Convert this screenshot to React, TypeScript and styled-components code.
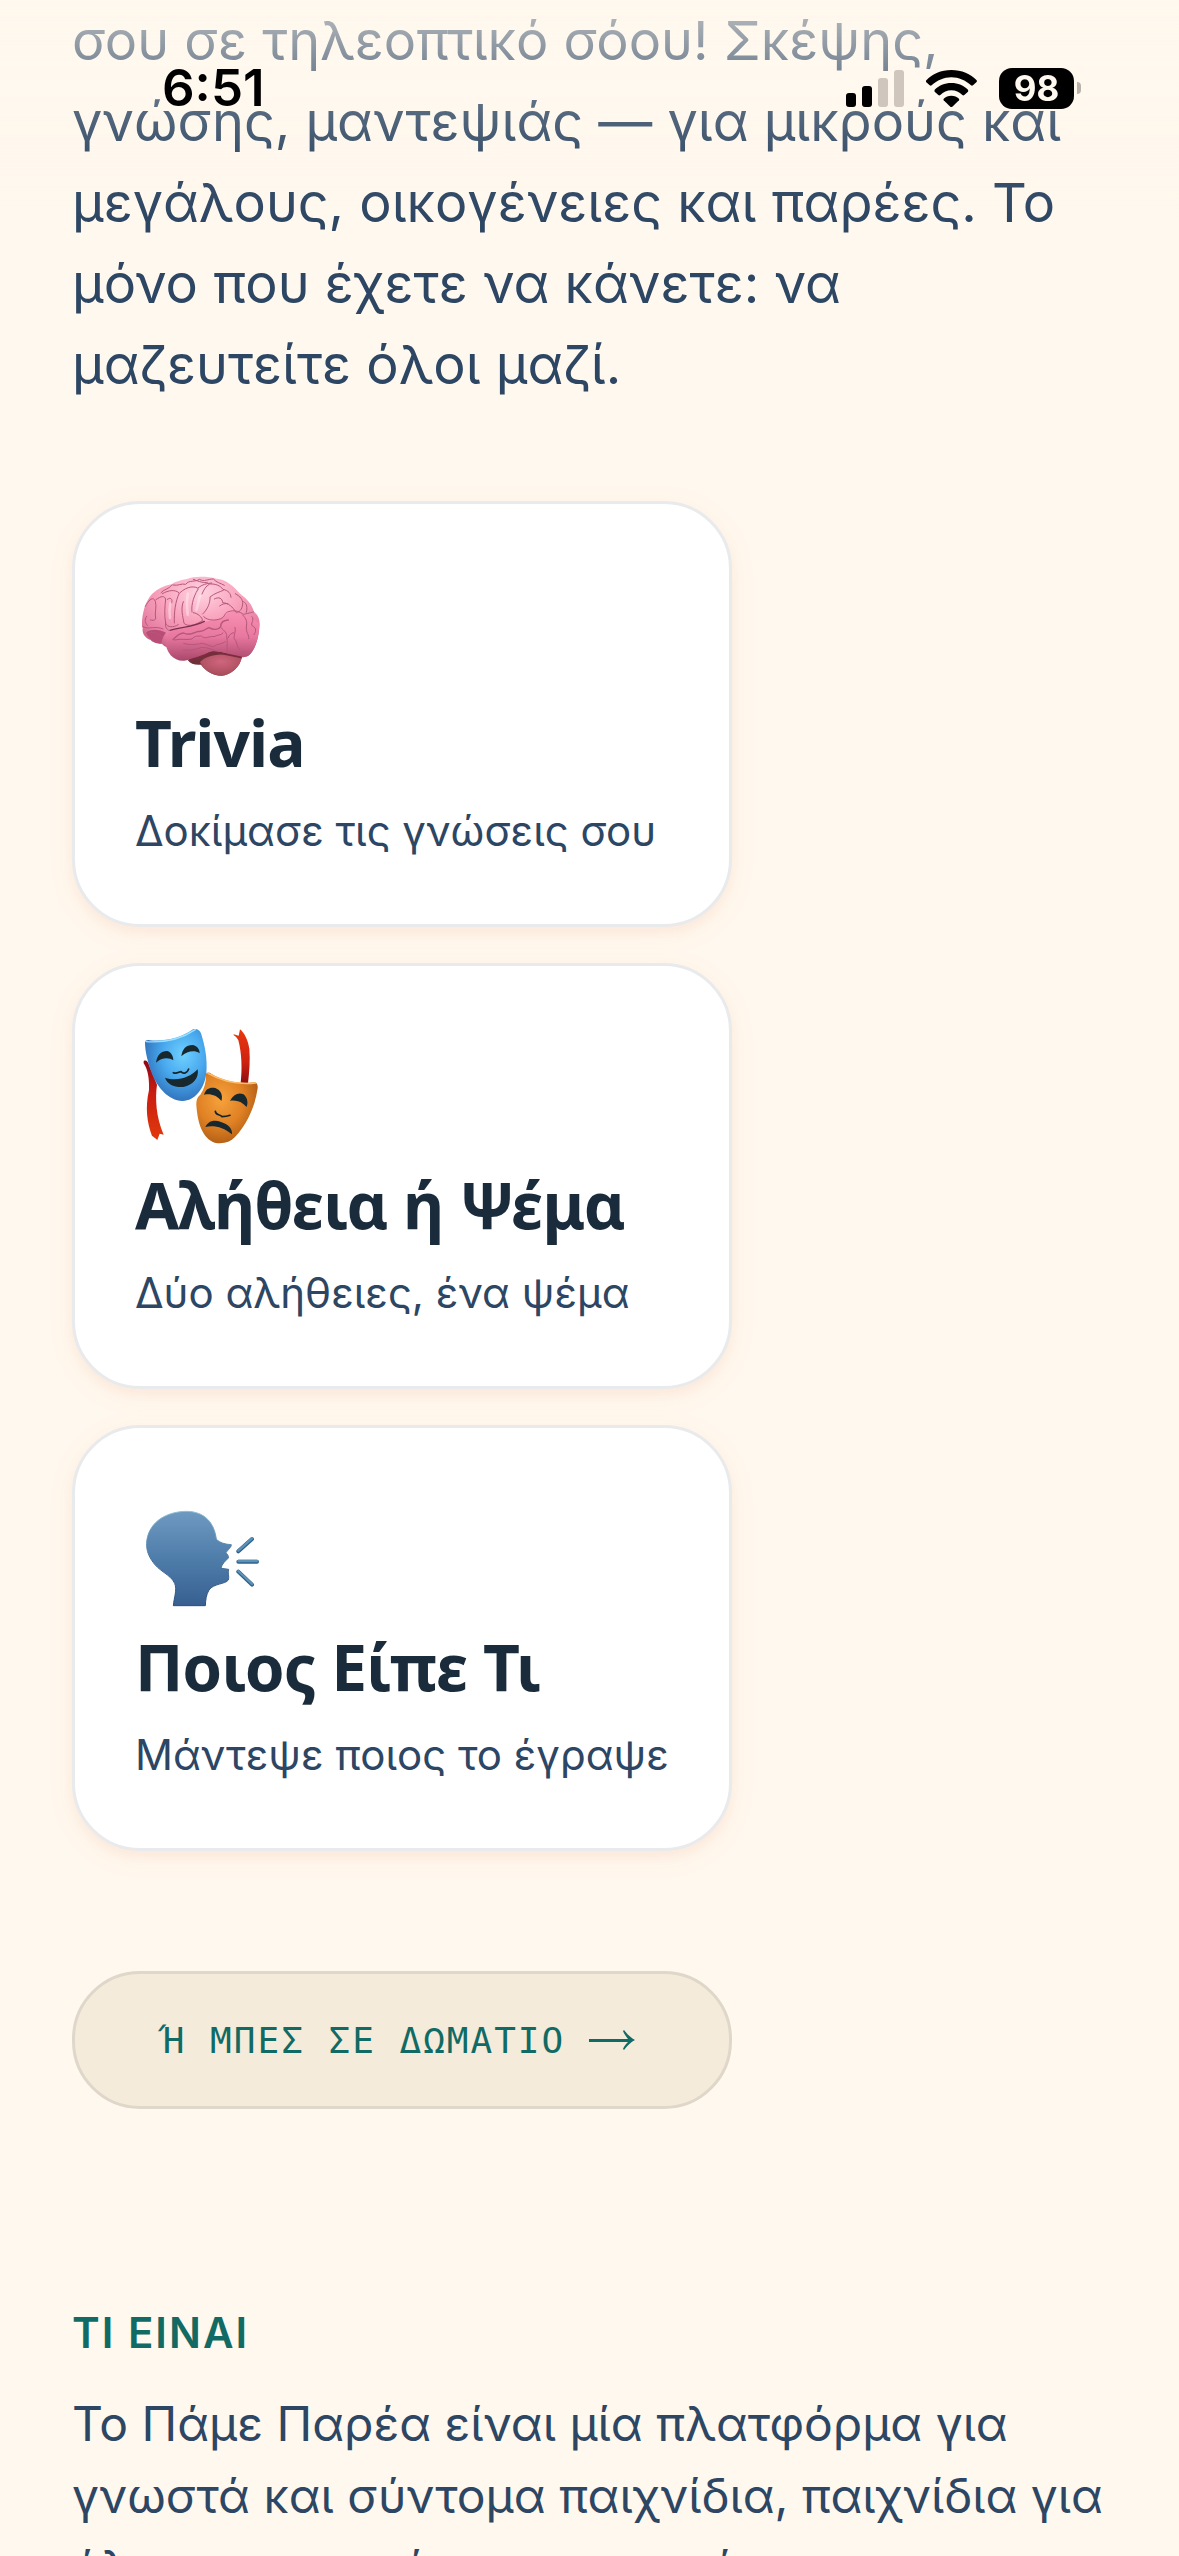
import React from 'react'
import styled, { createGlobalStyle } from 'styled-components'

type GameIcon = "brain" | "masks" | "speaking";

interface Game {
    id: string;
    icon: GameIcon;
    title: string;
    subtitle: string;
}

const GAMES: Game[] = [
    { id: "trivia", icon: "brain", title: "Trivia", subtitle: "Δοκίμασε τις γνώσεις σου" },
    { id: "truth", icon: "masks", title: "Αλήθεια ή Ψέμα", subtitle: "Δύο αλήθειες, ένα ψέμα" },
    { id: "who", icon: "speaking", title: "Ποιος Είπε Τι", subtitle: "Μάντεψε ποιος το έγραψε" },
]

const BrainIcon: React.FC = () => (
    <EmojiSvg viewBox="45 12 378 360" aria-hidden="true">
        <defs>
            <radialGradient id="brainFill" cx="0.5" cy="0.2" r="0.75">
                <stop offset="0" stopColor="#ffd3e0" />
                <stop offset="0.45" stopColor="#f9a3bd" />
                <stop offset="0.8" stopColor="#e77fa3" />
                <stop offset="1" stopColor="#c25a80" />
            </radialGradient>
            <linearGradient id="lobeFill" x1="0" y1="0" x2="0" y2="1">
                <stop offset="0" stopColor="#f88fb2" />
                <stop offset="0.5" stopColor="#e8789f" />
                <stop offset="1" stopColor="#a9476a" />
            </linearGradient>
            <radialGradient id="stemFill" cx="0.5" cy="0.35" r="0.7">
                <stop offset="0" stopColor="#d0657f" />
                <stop offset="1" stopColor="#a34a55" />
            </radialGradient>
        </defs>
        <path d="M203 300C212 312 226 316 243 314C258 334 280 347 304 347C332 345 360 322 366 290L290 262Z" fill="#70303a" />
        <path d="M240 306C252 332 279 347 304 347C332 345 360 322 366 290C340 278 262 278 240 306Z" fill="url(#stemFill)" />
        <path d="M66 196C65 172 72 128 96 102C114 86 134 77 154 73C167 64 185 60 201 57C222 48 262 49 290 56C318 58 340 78 360 101C384 118 396 135 402 155C416 166 421 180 418 205C415 242 402 276 384 288C374 293 362 292 352 288C320 281 295 270 270 275L150 262C136 262 130 256 126 251C112 251 98 248 92 240C74 234 66 220 68 205Z" fill="url(#brainFill)" />
        <path d="M136 239C138 222 158 206 192 205C214 200 230 192 262 184C290 180 309 178 323 160C346 148 384 164 418 190C416 242 402 276 384 288C374 293 362 292 352 288C320 281 295 270 270 275C248 288 220 297 193 302C164 305 136 280 136 239Z" fill="url(#lobeFill)" />
        <path d="M78 218C91 206 118 207 138 218C128 229 124 247 125 251C108 251 94 246 78 218Z" fill="#b94d75" />
        <g fill="none" stroke="#b5587a" strokeWidth="3" strokeLinecap="round" strokeLinejoin="round">
            <path d="M76 139C92 110 102 113 106 124C111 140 103 156 107 177C104 181 97 182 91 180" />
            <path d="M108 119C125 107 132 107 137 117C135 137 132 164 137 190C141 202 160 204 175 194" />
            <path d="M127 101C146 90 165 88 178 99C166 124 162 157 163 189" />
            <path d="M142 118C151 111 159 116 155 129" />
            <path d="M180 98C202 77 226 78 235 86C216 116 214 143 216 156" />
            <path d="M190 125C181 146 189 171 192 190C204 202 228 195 248 181C246 172 234 160 220 158" />
            <path d="M235 83C247 74 258 70 275 69" />
            <path d="M246 102C252 88 257 79 269 72C287 71 301 77 309 88C326 92 332 100 333 112" />
            <path d="M248 162C264 147 271 127 270 111C285 99 299 96 310 91" />
            <path d="M283 117C297 109 307 115 308 128C325 129 339 141 347 156" />
            <path d="M299 138C307 131 315 130 324 131" />
            <path d="M251 170C264 184 289 181 302 176C316 170 313 160 323 156C345 147 361 157 371 163C389 159 398 156 401 156" />
            <path d="M346 101C361 110 369 118 368 132C366 151 358 155 350 158" />
            <path d="M371 125C382 132 382 143 379 157" />
            <path d="M368 165C379 176 382 184 379 201C378 220 388 223 386 236" />
            <path d="M396 170C405 179 390 191 397 198C411 204 408 216 402 224" />
            <path d="M68 200C86 210 106 196 129 207" />
            <path d="M80 169C71 180 77 192 83 197" />
            <path d="M83 219C99 214 112 220 125 230" />
            <path d="M137 188C134 202 141 208 146 211" />
            <path d="M159 239C170 227 179 219 191 219C207 228 220 219 234 214C250 217 257 206 267 203C281 211 296 210 302 200C302 188 310 181 325 180" strokeWidth="4" />
            <path d="M163 240C184 235 200 241 216 237C224 226 235 229 244 228C256 240 267 227 282 230C294 223 303 227 309 219" />
            <path d="M191 250C208 256 229 254 245 250C259 251 268 259 281 260C292 250 303 255 316 245" />
            <path d="M190 270C208 274 230 267 246 262C262 262 273 268 286 272" />
            <path d="M302 202C315 215 321 218 320 231C324 245 319 260 322 273" />
            <path d="M345 202C349 213 342 221 342 235C352 243 349 260 359 270" />
            <path d="M324 234C328 224 333 220 341 218" />
            <path d="M360 281C364 276 371 274 378 276" />
            <path d="M158 75C175 79 184 69 197 73C207 59 226 67 238 58C253 66 264 57 280 57C290 68 301 69 313 76" />
            <path d="M220 58C240 66 251 69 262 67" />
            <path d="M123 98C130 88 146 88 155 76" />
        </g>
        <path d="M150 211C188 200 220 201 253 184" fill="none" stroke="#7d2f50" strokeWidth="4" strokeLinecap="round" />
        <path d="M209 300C229 296 259 284 278 277C310 279 332 287 363 292" fill="none" stroke="#7d2c3f" strokeWidth="5" strokeLinecap="round" />
        <g fill="none" stroke="#fff0f5" strokeOpacity="0.45" strokeWidth="8" strokeLinecap="round">
            <path d="M204 101C198 120 201 142 203 164" />
            <path d="M240 108C234 128 233 140 229 150" />
            <path d="M151 129C148 144 148 161 150 174" />
        </g>
    </EmojiSvg>
)

const MasksIcon: React.FC = () => (
    <EmojiSvg viewBox="45 48 378 360" aria-hidden="true">
        <defs>
            <radialGradient id="blueMask" cx="0.62" cy="0.36" r="0.75">
                <stop offset="0" stopColor="#6fd0ff" />
                <stop offset="0.45" stopColor="#49a9ee" />
                <stop offset="1" stopColor="#2862ad" />
            </radialGradient>
            <radialGradient id="orangeMask" cx="0.4" cy="0.38" r="0.75">
                <stop offset="0" stopColor="#f7a23c" />
                <stop offset="0.5" stopColor="#df8124" />
                <stop offset="1" stopColor="#a1500f" />
            </radialGradient>
            <linearGradient id="ribbonFill" x1="0" y1="0" x2="0" y2="1">
                <stop offset="0" stopColor="#8f0718" />
                <stop offset="0.4" stopColor="#c81d10" />
                <stop offset="1" stopColor="#e23a0c" />
            </linearGradient>
            <linearGradient id="ribbonBack" x1="0" y1="0" x2="0" y2="1">
                <stop offset="0" stopColor="#e8380f" />
                <stop offset="0.6" stopColor="#cf220f" />
                <stop offset="1" stopColor="#8f0c12" />
            </linearGradient>
        </defs>
        <path d="M71 153C78 149 84 154 87 165L111 224C105 264 108 321 131 374L119 371L112 390C104 384 100 380 96 378C81 337 75 294 87 240C88 208 84 178 71 160Z" fill="url(#ribbonFill)" />
        <path d="M341 73L356 77L360 58C374 69 384 91 388 116C391 150 388 184 384 220L362 218C367 177 365 128 355 91C351 83 346 79 341 76Z" fill="url(#ribbonBack)" />
        <path d="M75 97C76 91 82 89 90 91C139 94 181 84 219 58C230 54 239 60 243 70C254 105 263 145 259 190C254 236 224 273 188 273C143 271 112 230 96 191C84 160 75 125 75 97Z" fill="url(#blueMask)" />
        <path d="M78 95C130 99 181 89 226 59" fill="none" stroke="#9be0ff" strokeWidth="4" strokeLinecap="round" />
        <path d="M258 191C262 186 269 187 275 192C317 215 361 222 402 217C410 217 414 223 413 235C405 288 383 340 345 381C330 397 308 403 284 398C248 385 233 341 229 285C229 266 234 260 241 254C254 235 259 214 258 191Z" fill="url(#orangeMask)" />
        <path d="M264 190C310 216 360 224 407 219" fill="none" stroke="#ffc06c" strokeWidth="4" strokeLinecap="round" />
        <g fill="#17282f">
            <path d="M108 158C112 132 126 122 142 123C153 126 160 138 160 151C148 142 124 142 108 158Z" />
            <path d="M184 139C187 116 199 105 217 105C231 107 239 117 239 130C222 119 202 124 184 139Z" />
            <path d="M135 203C171 215 208 204 233 178C238 202 220 226 190 231C163 233 141 222 135 203Z" />
            <path d="M252 254C258 236 269 231 286 234C302 240 310 256 304 273C290 255 271 250 252 254Z" />
            <path d="M330 272C341 254 353 247 369 252C381 260 386 276 380 291C366 275 350 269 330 272Z" />
            <path d="M256 351C265 332 283 328 303 336C324 343 338 355 336 373C310 352 282 345 256 351Z" />
        </g>
        <g fill="none" stroke="#14242b" strokeWidth="5" strokeLinecap="round" strokeLinejoin="round">
            <path d="M160 188C170 193 177 185 183 185C192 195 203 186 206 177" />
            <path d="M286 304C287 316 299 312 306 320C314 320 322 319 330 316" />
        </g>
    </EmojiSvg>
)

const SpeakingIcon: React.FC = () => (
    <EmojiSvg viewBox="45 -6 378 360" aria-hidden="true">
        <defs>
            <linearGradient id="headFill" x1="0" y1="60" x2="0" y2="350" gradientUnits="userSpaceOnUse">
                <stop offset="0" stopColor="#6f9ac2" />
                <stop offset="0.5" stopColor="#4f7daa" />
                <stop offset="1" stopColor="#365f90" />
            </linearGradient>
            <linearGradient id="headEdge" x1="0" y1="60" x2="0" y2="350" gradientUnits="userSpaceOnUse">
                <stop offset="0" stopColor="#90c4d8" />
                <stop offset="0.5" stopColor="#46749f" />
                <stop offset="1" stopColor="#284c78" />
            </linearGradient>
        </defs>
        <path d="M80 160C82 102 133 64 201 64C255 65 283 99 289 148C299 158 314 163 334 164C335 171 325 178 318 188C321 193 327 197 325 204C318 212 305 221 303 235L326 238C322 248 329 261 325 270C316 283 281 280 267 300C258 315 257 330 256 347L160 347C162 323 172 300 164 280C151 252 116 245 95 211C83 192 79 176 80 160Z" fill="url(#headFill)" stroke="url(#headEdge)" strokeWidth="3" strokeLinejoin="round" />
        <g fill="none" strokeLinecap="round">
            <path d="M355 184L396 147M355 215H411M355 245L396 284" stroke="#2f628c" strokeWidth="12" />
            <path d="M355 182L396 145M355 213H411M355 243L396 282" stroke="#5c92b8" strokeWidth="7" />
        </g>
    </EmojiSvg>
)

const ICONS: { [k in GameIcon]: React.FC } = {
    brain: BrainIcon,
    masks: MasksIcon,
    speaking: SpeakingIcon,
}

const StatusBar: React.FC = () => (
    <StatusBarStyled>
        <p className='status-time'>6:51</p>
        <div className='status-icons'>
            <svg width="58" height="37" viewBox="0 0 58 37" aria-hidden="true">
                <rect x="0" y="23" width="10" height="14" rx="3" fill="#000" />
                <rect x="16" y="16" width="10" height="21" rx="3" fill="#000" />
                <rect x="32" y="8" width="10" height="29" rx="3" fill="#cfc6be" />
                <rect x="48" y="0" width="10" height="37" rx="3" fill="#cfc6be" />
            </svg>
            <svg width="51" height="37" viewBox="0 0 153 111" aria-hidden="true">
                <path d="M76 0C107 0 134 12 152 31C153 33 153 35 151 37L141 46C139 48 137 48 135 46C119 31 98 22 76 22C54 22 33 31 17 46C15 48 13 48 11 46L1 37C-1 35-1 33 1 31C19 12 45 0 76 0Z" />
                <path d="M76 39C96 39 114 47 126 59C127 61 127 63 126 65L115 75C113 77 111 76 109 75C100 67 89 61 76 61C63 61 52 67 43 75C41 76 39 77 37 75L26 65C25 63 25 61 26 59C38 47 56 39 76 39Z" />
                <path d="M76 77C85 77 93 80 99 86C100 88 100 90 99 91L79 110C77 111 75 111 73 110L53 91C52 90 52 88 53 86C59 80 67 77 76 77Z" />
            </svg>
            <div className='battery'>
                <span className='battery-level'>98</span>
                <span className='battery-nub' />
            </div>
        </div>
    </StatusBarStyled>
)

const GameCard: React.FC<{ game: Game }> = ({ game }) => {
    const Icon = ICONS[game.icon]
    return (
        <GameCardStyled href={`#${game.id}`}>
            <Icon />
            <h3 className='game-title'>{game.title}</h3>
            <p className='game-subtitle'>{game.subtitle}</p>
        </GameCardStyled>
    )
}

const App: React.FC = () => {
    return (
        <>
            <GlobalStyle />
            <StatusBar />
            <HomeStyled>
                <Lead>
                    σου σε τηλεοπτικό σόου! Σκέψης, γνώσης, μαντεψιάς — για μικρούς και μεγάλους, οικογένειες και παρέες. Το μόνο που έχετε να κάνετε: να μαζευτείτε όλοι μαζί.
                </Lead>
                <GamesStyled>
                    {GAMES.map((game) =>
                        <GameCard game={game} key={game.id} />
                    )}
                </GamesStyled>
                <JoinButton type="button">
                    <span>Ή ΜΠΕΣ ΣΕ ΔΩΜΑΤΙΟ</span>
                    <svg width="46" height="20" viewBox="0 0 46 20" aria-hidden="true">
                        <path d="M0 9H39C37 6 35 4 34 1L35 0C38 4 42 8 46 10C42 12 38 16 35 20L34 19C35 16 37 14 39 12H0Z" fill="currentColor" />
                    </svg>
                </JoinButton>
                <AboutStyled>
                    <h2 className='about-title'>ΤΙ ΕΙΝΑΙ</h2>
                    <p className='about-text'>
                        Το Πάμε Παρέα είναι μία πλατφόρμα για γνωστά και σύντομα παιχνίδια, παιχνίδια για όλους τους παίκτες και παρέες.
                    </p>
                </AboutStyled>
            </HomeStyled>
        </>
    )
}

export default App

const GlobalStyle = createGlobalStyle`
    body{
        margin: 0;
        background: #fff8ee;
        color: #2d4663;
        font-family: Inter, "Noto Sans", sans-serif;
    }
    p, h2, h3{
        margin: 0;
    }
`

const StatusBarStyled = styled.header`
    position: fixed;
    top: 0;
    left: 0;
    right: 0;
    z-index: 1;
    box-sizing: border-box;
    height: 222px;
    padding: 58px 98px 0 162px;
    display: flex;
    justify-content: space-between;
    align-items: flex-start;
    color: #000;
    pointer-events: none;
    background: linear-gradient(
        rgba(255, 248, 238, 0.7) 0,
        rgba(255, 248, 238, 0.4) 60px,
        rgba(255, 248, 238, 0.18) 116px,
        rgba(255, 248, 238, 0.08) 150px,
        rgba(255, 248, 238, 0) 222px
    );

    .status-time{
        font-size: 51px;
        line-height: 60px;
        font-weight: 600;
    }
    .status-icons{
        height: 60px;
        display: flex;
        align-items: center;
        gap: 22px;
    }
    .battery{
        display: flex;
        align-items: center;
        gap: 3px;
    }
    .battery-level{
        width: 75px;
        height: 41px;
        border-radius: 13px;
        background: #000;
        color: #fff8ee;
        font-size: 35px;
        line-height: 41px;
        font-weight: 700;
        text-align: center;
    }
    .battery-nub{
        width: 4px;
        height: 12px;
        border-radius: 0 4px 4px 0;
        background: #b8b2aa;
    }
`

const HomeStyled = styled.main`
    padding: 0 72px 96px;
    display: flex;
    flex-direction: column;
    align-items: flex-start;
`

const Lead = styled.p`
    font-size: 54px;
    line-height: 81px;
`

const GamesStyled = styled.div`
    width: 100%;
    max-width: 660px;
    margin: 96px 0 120px;
    display: grid;
    gap: 36px;
`

const EmojiSvg = styled.svg`
    display: block;
    width: 126px;
    height: 120px;
`

const GameCardStyled = styled.a`
    padding: 60px;
    border: 3px solid #e8eaec;
    border-radius: 68px;
    background: #fff;
    text-decoration: none;
    box-shadow: 0 6px 12px rgba(190, 80, 60, 0.06), 0 6px 30px rgba(255, 120, 70, 0.06);

    .game-title{
        margin: 24px 0;
        color: #1a2b3c;
        font-family: "Noto Sans", sans-serif;
        font-size: 64px;
        line-height: 69px;
        font-weight: 700;
        letter-spacing: -1px;
    }
    .game-subtitle{
        padding-bottom: 3px;
        color: #2d4663;
        font-size: 42px;
        line-height: 60px;
    }
`

const JoinButton = styled.button`
    width: 100%;
    max-width: 660px;
    height: 138px;
    padding: 0 6px 0 0;
    border: 3px solid #dfd7c9;
    border-radius: 68px;
    background: #f5ebdb;
    color: #116a63;
    display: flex;
    justify-content: center;
    align-items: center;
    gap: 24px;
    font-family: "DejaVu Sans Mono", monospace;
    font-size: 36px;
    letter-spacing: 2px;
`

const AboutStyled = styled.section`
    margin-top: 192px;
    display: grid;
    gap: 24px;

    .about-title{
        color: #116a63;
        font-size: 42px;
        line-height: 63px;
        font-weight: 600;
        letter-spacing: 2px;
    }
    .about-text{
        font-size: 48px;
        line-height: 72px;
    }
`
